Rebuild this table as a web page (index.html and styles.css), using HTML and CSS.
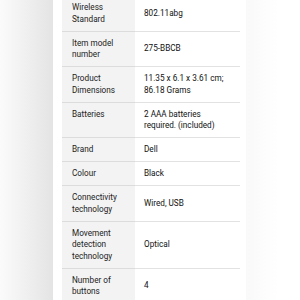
FILE: index.html
```html
<!DOCTYPE html>
<html>
<head>
	<title>Product information</title>
	<meta name="viewport" content="width=device-width, initial-scale=1">
	<link rel="stylesheet" href="styles.css">
</head>
<body>

	<div id="page">
		<div class="gutter"></div>

		<div id="details">
			<table class="specs">
				<tr><th>Wireless Standard</th><td>802.11abg</td></tr>
				<tr><th>Item model number</th><td>275-BBCB</td></tr>
				<tr><th>Product Dimensions</th><td>11.35 x 6.1 x 3.61 cm; 86.18 Grams</td></tr>
				<tr><th>Batteries</th><td>2 AAA batteries required. (included)</td></tr>
				<tr><th>Brand</th><td>Dell</td></tr>
				<tr><th>Colour</th><td>Black</td></tr>
				<tr><th>Connectivity technology</th><td>Wired, USB</td></tr>
				<tr><th>Movement detection technology</th><td>Optical</td></tr>
				<tr><th>Number of buttons</th><td>4</td></tr>
			</table>
		</div>

		<div class="side"></div>
	</div>

</body>
</html>
```

FILE: styles.css
```css
* {
	box-sizing: border-box;
}

html, body {
	margin: 0;
	height: 100%;
	background: #fff;
	overflow: hidden;
}

#page {
	display: flex;
	height: 100%;
	font-family: Roboto, "Liberation Sans", sans-serif;
	font-size: 8.2px;
	color: #0f1111;
}

.gutter {
	width: 53px;
	flex-shrink: 0;
	background: linear-gradient(to right, #fbfbfb, #e4e4e4);
}

#details {
	width: 193px;
	flex-shrink: 0;
	padding-left: 9px;
	margin-top: -4px;
}

.side {
	flex-grow: 1;
	background: linear-gradient(to right, #f9f9f9, #fff 60%);
}

.specs {
	width: 178px;
	border-collapse: collapse;
}

.specs th,
.specs td {
	padding: 6px 9px 5.5px;
	line-height: 11.5px;
	text-align: left;
	vertical-align: middle;
	font-weight: normal;
	border-bottom: 1px solid #e2e2e2;
}

/* labels stay at the top of tall rows */
.specs th {
	width: 73px;
	padding-left: 10px;
	vertical-align: top;
	color: #222;
	background-color: #f3f3f3;
	border-bottom-color: #dcdcdc;
}
```
